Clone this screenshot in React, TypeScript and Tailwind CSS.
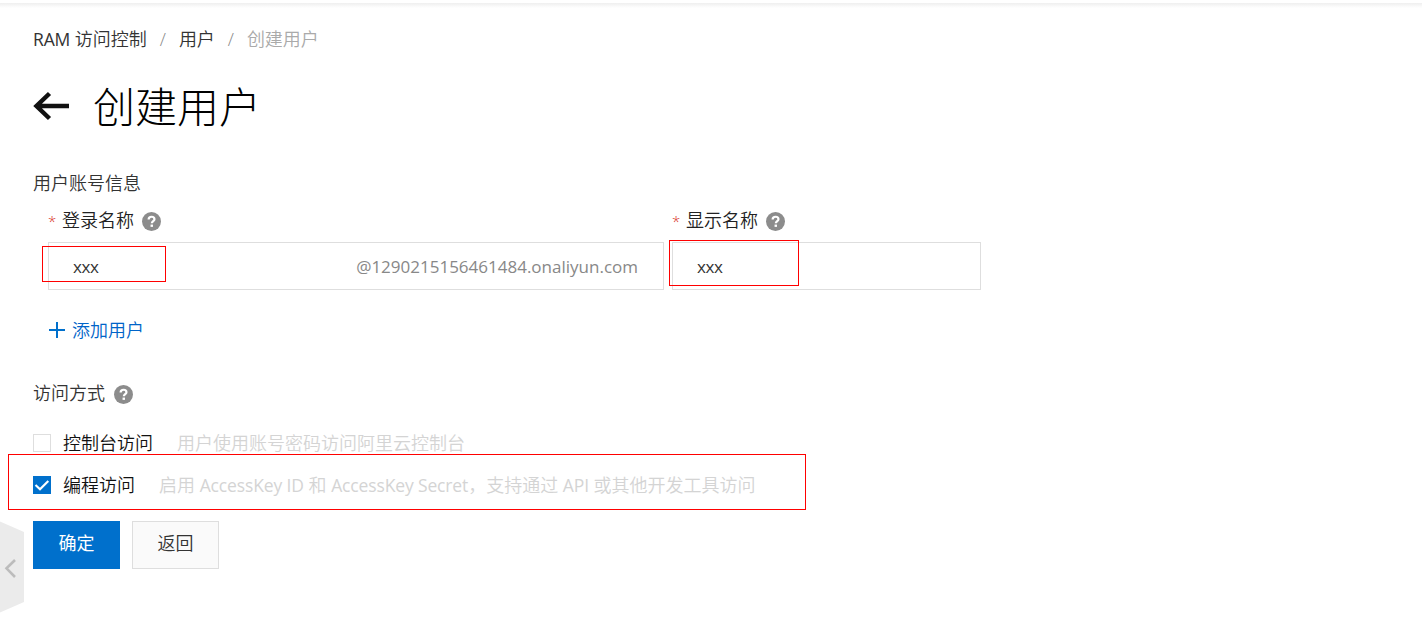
import type { ReactNode } from "react";

function HelpIcon() {
  return (
    <svg width="19" height="19" viewBox="0 0 18 18" className="shrink-0">
      <circle cx="9" cy="9" r="9" fill="#8c8c8c" />
      <path
        d="M6.3 7c0-1.6 1.1-2.5 2.8-2.5s2.7.9 2.7 2.3c0 1.9-2.5 1.8-2.5 3.9"
        fill="none"
        stroke="#fff"
        strokeWidth="2.1"
      />
      <rect x="8.1" y="11.9" width="2.3" height="2.2" fill="#fff" />
    </svg>
  );
}

// Latin runs are set slightly smaller than the Chinese around them
function Latin({ children }: { children: ReactNode }) {
  return <span className="text-[17.5px] font-normal tracking-[-0.14px]">{children}</span>;
}

function Field({ label, suffix, className, highlight }: {
  label: string;
  suffix?: string;
  className: string;
  highlight: string;
}) {
  return (
    <div className={className}>
      <div className="flex h-[42px] items-center">
        <span className="w-3.5 text-[15px] font-[350] text-[#d93026]">*</span>
        <span className="-mt-0.5 text-[#222]">{label}</span>
        <span className="ml-2 mt-px">
          <HelpIcon />
        </span>
      </div>
      <div className="relative flex h-12 items-center justify-between border border-[#dedede] px-6 pt-px text-[17px] font-normal">
        <span className="tracking-[-0.4px] text-[#333]">xxx</span>
        {suffix && <span className="mr-px text-[#888]">{suffix}</span>}
        <span className={`pointer-events-none absolute border border-[#f00] ${highlight}`} />
      </div>
    </div>
  );
}

function AccessOption({ label, hint, checked }: { label: string; hint: ReactNode; checked?: boolean }) {
  return (
    <div className="flex h-[42px] items-center whitespace-nowrap">
      {checked ? (
        <span className="size-[18px] bg-[#0070cc]">
          <svg width="18" height="18" viewBox="0 0 18 18" fill="none" stroke="#fff" strokeWidth="2.2">
            <path d="M2.5 9l4.5 4.2L15.3 5" />
          </svg>
        </span>
      ) : (
        <span className="size-[18px] border border-[#dedede]" />
      )}
      <span className="ml-3 text-[#111]">{label}</span>
      <span className="ml-6 text-[#d4d4d4]">{hint}</span>
    </div>
  );
}

export default function App() {
  return (
    <div className="relative h-[632px] w-full overflow-hidden bg-white font-['Open_Sans','Noto_Sans_CJK_SC',sans-serif] text-[18px] leading-6 font-[350] text-[#333]">
      <div className="mt-[3px] h-[5px] bg-linear-to-b from-[#efefef] to-white" />

      <main className="pl-[33px]">
        <nav className="mt-[19px] flex h-6 items-center">
          <span><Latin>RAM</Latin> 访问控制</span>
          <span className="w-8 text-center text-[#888]">/</span>
          <span>用户</span>
          <span className="w-8 text-center text-[#888]">/</span>
          <span className="text-[#aaa]">创建用户</span>
        </nav>

        <header className="mt-[32px] flex h-12 items-center">
          <svg width="37" height="30" viewBox="0 0 37 30" fill="none" stroke="#111" strokeWidth="4.5" className="-mt-0.5">
            <path d="M3 15H36M16.5 2.5L3.5 15l13 12.5" />
          </svg>
          <h1 className="ml-[23px] text-[42px] leading-[48px] font-light text-[#000]">创建用户</h1>
        </header>

        <h2 className="mt-10">用户账号信息</h2>
        <div className="mt-[5px] ml-[15px] flex gap-2">
          <Field
            label="登录名称"
            suffix="@1290215156461484.onaliyun.com"
            className="w-[616px]"
            highlight="-left-[7px] top-[3px] h-9 w-[124px]"
          />
          <Field label="显示名称" className="w-[309px]" highlight="-left-1 -top-[3px] h-[46px] w-[130px]" />
        </div>

        <button className="mt-7 ml-[15px] flex h-6 items-center text-[#0064c8]">
          <svg width="18" height="18" viewBox="0 0 18 18" stroke="#0070cc" strokeWidth="2">
            <path d="M9 1v16M1 9h16" />
          </svg>
          <span className="ml-1.5">添加用户</span>
        </button>

        <h2 className="mt-10 flex h-6 items-center">
          <span className="-mt-0.5">访问方式</span>
          <span className="ml-[9px] mt-px">
            <HelpIcon />
          </span>
        </h2>

        <div className="mt-4">
          <AccessOption label="控制台访问" hint="用户使用账号密码访问阿里云控制台" />
          <div className="relative">
            <AccessOption
              checked
              label="编程访问"
              hint={
                <>
                  启用 <Latin>AccessKey ID</Latin> 和 <Latin>AccessKey Secret</Latin>，支持通过 <Latin>API</Latin> 或其他开发工具访问
                </>
              }
            />
            <span className="pointer-events-none absolute -top-[10px] -left-[25px] h-14 w-[798px] border border-[#f00]" />
          </div>
        </div>

        <div className="mt-[15px] flex gap-3">
          <button className="h-12 w-[87px] bg-[#0070cc] pb-1 font-normal text-white">确定</button>
          <button className="h-12 w-[87px] border border-[#dedede] bg-[#fafafa] pb-1 text-[#333]">返回</button>
        </div>
      </main>

      {/* sidebar handle */}
      <svg className="absolute top-[521px] left-0" width="24" height="92" viewBox="0 0 24 92">
        <path d="M0 0.5L24 11v70L0 91.5z" fill="#ebebeb" />
        <path d="M15 39l-8.5 8.3L15 56" fill="none" stroke="#bcbcbc" strokeWidth="2.6" />
      </svg>
    </div>
  );
}
